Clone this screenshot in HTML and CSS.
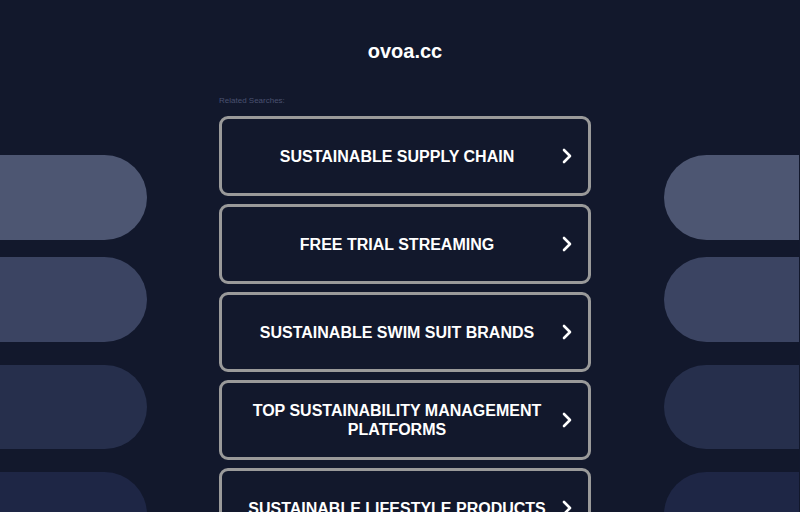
FILE: index.html
```html
<!DOCTYPE html>
<html lang="en">
<head>
  <meta charset="UTF-8">
  <meta name="viewport" content="width=device-width, initial-scale=1.0">
  <title>ovoa.cc</title>
  <link rel="stylesheet" href="styles.css">
</head>
<body>
  <div class="page">
    <!-- decorative pills on the left -->
    <div class="side side-left">
      <div class="pill p1"></div>
      <div class="pill p2"></div>
      <div class="pill p3"></div>
      <div class="pill p4"></div>
    </div>

    <main class="content">
      <h1 class="domain">ovoa.cc</h1>
      <p class="related">Related Searches:</p>

      <ul class="links">
        <li><a href="#" class="link"><span class="label">SUSTAINABLE SUPPLY CHAIN</span><svg class="chev" viewBox="0 0 12 16"><polyline points="3,2 9,8 3,14"/></svg></a></li>
        <li><a href="#" class="link"><span class="label">FREE TRIAL STREAMING</span><svg class="chev" viewBox="0 0 12 16"><polyline points="3,2 9,8 3,14"/></svg></a></li>
        <li><a href="#" class="link"><span class="label">SUSTAINABLE SWIM SUIT BRANDS</span><svg class="chev" viewBox="0 0 12 16"><polyline points="3,2 9,8 3,14"/></svg></a></li>
        <li><a href="#" class="link"><span class="label">TOP SUSTAINABILITY MANAGEMENT PLATFORMS</span><svg class="chev" viewBox="0 0 12 16"><polyline points="3,2 9,8 3,14"/></svg></a></li>
        <li><a href="#" class="link"><span class="label">SUSTAINABLE LIFESTYLE PRODUCTS</span><svg class="chev" viewBox="0 0 12 16"><polyline points="3,2 9,8 3,14"/></svg></a></li>
      </ul>
    </main>

    <!-- decorative pills on the right -->
    <div class="side side-right">
      <div class="pill p1"></div>
      <div class="pill p2"></div>
      <div class="pill p3"></div>
      <div class="pill p4"></div>
    </div>
  </div>
</body>
</html>
```

FILE: styles.css
```css
html, body {
  margin: 0;
  padding: 0;
  background-color: #12182c;
  font-family: "Liberation Sans", Arial, sans-serif;
  overflow: hidden;
}

.page {
  display: grid;
  grid-template-columns: 147px 372px 136px;
  column-gap: 72px;
  height: 512px;
}

.side {
  display: flex;
  flex-direction: column;
  padding-top: 155px;
  overflow: hidden;
}

.side-right {
  margin-left: 1px;
}

.pill {
  height: 85px;
  flex-shrink: 0;
}

.side-left .pill {
  border-radius: 0 43px 43px 0;
}

.side-right .pill {
  border-radius: 43px 0 0 43px;
}

.pill.p1 { background-color: #4d5672; }
.pill.p2 { background-color: #3b4462; margin-top: 17px; }
.pill.p3 { background-color: #262f4c; margin-top: 23px; height: 84px; }
.pill.p4 { background-color: #1e2645; margin-top: 23px; }

.content {
  padding-top: 39px;
}

.domain {
  margin: 0;
  text-align: center;
  color: #ffffff;
  font-size: 20px;
  font-weight: bold;
  line-height: 24px;
}

.related {
  margin: 33px 0 0;
  font-size: 8px;
  line-height: 10px;
  color: #4a5170;
}

.links {
  list-style: none;
  margin: 10px 0 0;
  padding: 0;
  display: flex;
  flex-direction: column;
  gap: 8px;
}

.link {
  display: flex;
  align-items: center;
  height: 80px;
  box-sizing: border-box;
  border: 3px solid #9a9a9a;
  border-radius: 9px;
  padding: 0 15px 0 23px;
  text-decoration: none;
  color: #ffffff;
}

.label {
  flex: 1;
  text-align: center;
  font-size: 16px;
  font-weight: bold;
  line-height: 19px;
}

.chev {
  width: 12px;
  height: 16px;
  margin-left: 12px;
  fill: none;
  stroke: #ffffff;
  stroke-width: 2.6;
  stroke-linecap: round;
  stroke-linejoin: round;
}
```
